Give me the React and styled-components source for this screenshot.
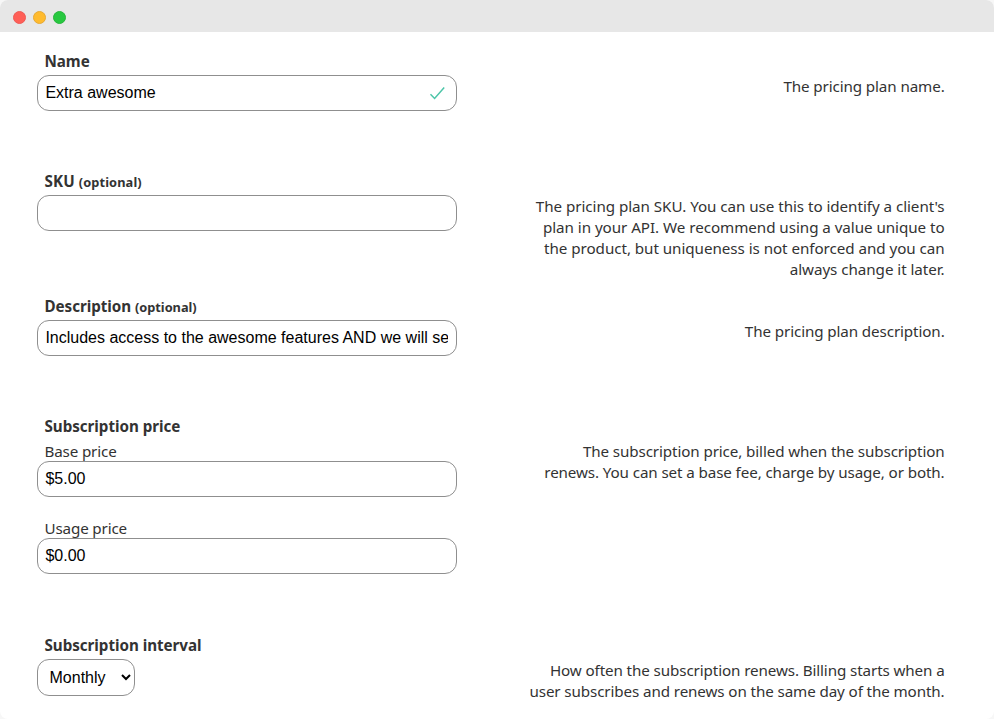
import React from "react";
import styled, { createGlobalStyle } from "styled-components";

const Global = createGlobalStyle`
  *, *::before, *::after { box-sizing: border-box; }
  body { margin: 0; background: #f7f7f7; overflow: hidden; }
`;

const Window = styled.main`
  width: 994px;
  height: 719px;
  overflow: hidden;
  border-radius: 8px;
  background: #fff;
  color: #333;
  font: 15.2px/21px "Noto Sans", sans-serif;
`;

const TitleBar = styled.header`
  display: flex;
  align-items: center;
  gap: 7px;
  height: 32px;
  padding: 2px 13px 0;
  background: #e7e7e7;
`;

const Dot = styled.span`
  width: 13px;
  height: 13px;
  border: 1px solid ${(p) => p.$edge};
  border-radius: 50%;
  background: ${(p) => p.$color};
`;

const Form = styled.form`
  display: flex;
  flex-direction: column;
`;

const Row = styled.section`
  display: grid;
  grid-template-columns: 420px 440px;
  column-gap: 47.6px;
  height: ${(p) => p.$height}px;
  padding: 19px 0 0 37px;
`;

const Field = styled.div`
  display: flex;
  flex-direction: column;
  align-items: flex-start;
`;

const Label = styled.label`
  height: 24px;
  padding-left: 7.5px;
  font-weight: 700;
  line-height: 21px;
  letter-spacing: ${(p) => p.$spacing || -0.04}px;
`;

const Optional = styled.small`
  font-size: 12.8px;
`;

const SubLabel = styled.label`
  height: 22px;
  padding-left: 7.5px;
  line-height: 24px;
  letter-spacing: -0.15px;
  margin-top: ${(p) => p.$top}px;
`;

const InputWrap = styled.div`
  position: relative;
  width: 420px;
  height: 36px;
`;

const Input = styled.input`
  display: block;
  width: 100%;
  height: 36px;
  padding: 0 8px 0 7.4px;
  border: 1px solid #8f8f8f;
  border-radius: 12px;
  background: #fff;
  color: #000;
  font: 16px "Liberation Sans", Arial, sans-serif;
`;

const Check = styled.svg`
  position: absolute;
  right: 12px;
  top: 11px;
`;

const Select = styled.select`
  width: 98px;
  height: 37px;
  padding: 0 2px 0 7.5px;
  border: 1px solid #8f8f8f;
  border-radius: 12px;
  background: #fff;
  color: #000;
  font: 16px "Liberation Sans", Arial, sans-serif;
`;

const Help = styled.p`
  margin: 25px 0 0;
  text-align: right;
  white-space: pre;
  letter-spacing: ${(p) => p.$spacing || -0.11}px;
`;

export default function App() {
  return (
    <Window>
      <Global />
      <TitleBar>
        <Dot $color="#ff5f57" $edge="#ee5a55" />
        <Dot $color="#ffbb2e" $edge="#e6a935" />
        <Dot $color="#28c840" $edge="#27b53b" />
      </TitleBar>
      <Form>
        <Row $height={120}>
          <Field>
            <Label htmlFor="name">Name</Label>
            <InputWrap>
              <Input id="name" defaultValue="Extra awesome" />
              <Check width="16" height="14" viewBox="0 0 16 14" fill="none" stroke="#4cc5a8" strokeWidth="1.5">
                <path d="M1.5 8.2 5.6 12.4 15.2 1.4" />
              </Check>
            </InputWrap>
          </Field>
          <Help>The pricing plan name.</Help>
        </Row>
        <Row $height={125}>
          <Field>
            <Label htmlFor="sku" $spacing={0.1}>SKU <Optional>(optional)</Optional></Label>
            <InputWrap><Input id="sku" /></InputWrap>
          </Field>
          <Help $spacing={-0.05}>{"The pricing plan SKU. You can use this to identify a client's\nplan in your API. We recommend using a value unique to\nthe product, but uniqueness is not enforced and you can\nalways change it later."}</Help>
        </Row>
        <Row $height={120}>
          <Field>
            <Label htmlFor="description">Description <Optional>(optional)</Optional></Label>
            <InputWrap><Input id="description" defaultValue="Includes access to the awesome features AND we will send you stickers." /></InputWrap>
          </Field>
          <Help>The pricing plan description.</Help>
        </Row>
        <Row $height={219}>
          <Field>
            <Label as="div">Subscription price</Label>
            <SubLabel htmlFor="base" $top={-1}>Base price</SubLabel>
            <InputWrap><Input id="base" defaultValue="$5.00" /></InputWrap>
            <SubLabel htmlFor="usage" $top={19}>Usage price</SubLabel>
            <InputWrap><Input id="usage" defaultValue="$0.00" /></InputWrap>
          </Field>
          <Help>{"The subscription price, billed when the subscription\nrenews. You can set a base fee, charge by usage, or both."}</Help>
        </Row>
        <Row $height={103}>
          <Field>
            <Label htmlFor="interval">Subscription interval</Label>
            <Select id="interval"><option>Monthly</option></Select>
          </Field>
          <Help>{"How often the subscription renews. Billing starts when a\nuser subscribes and renews on the same day of the month."}</Help>
        </Row>
      </Form>
    </Window>
  );
}
